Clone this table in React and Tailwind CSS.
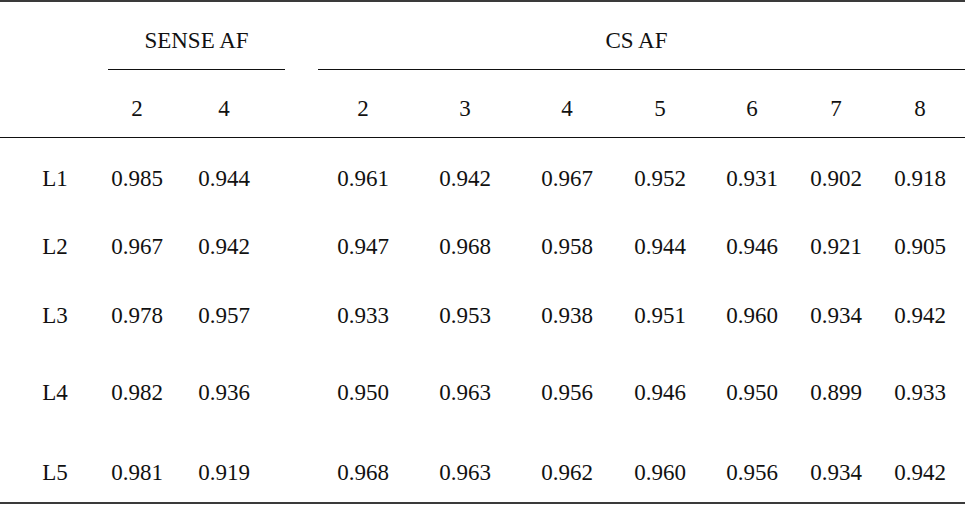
import React from "react";

const margins = [
  "ml-[20px]",
  "ml-[12px]",
  "ml-[17px]",
  "ml-[69px]",
  "ml-[32px]",
  "ml-[32px]",
  "ml-[23px]",
  "ml-[22px]",
  "ml-[14px]",
  "ml-[14px]",
];

const rows = [
  { label: "L1", vals: ["0.985", "0.944", "0.961", "0.942", "0.967", "0.952", "0.931", "0.902", "0.918"], mt: "mt-[28px]" },
  { label: "L2", vals: ["0.967", "0.942", "0.947", "0.968", "0.958", "0.944", "0.946", "0.921", "0.905"], mt: "mt-[42px]" },
  { label: "L3", vals: ["0.978", "0.957", "0.933", "0.953", "0.938", "0.951", "0.960", "0.934", "0.942"], mt: "mt-[43px]" },
  { label: "L4", vals: ["0.982", "0.936", "0.950", "0.963", "0.956", "0.946", "0.950", "0.899", "0.933"], mt: "mt-[51px]" },
  { label: "L5", vals: ["0.981", "0.919", "0.968", "0.963", "0.962", "0.960", "0.956", "0.934", "0.942"], mt: "mt-[54px]" },
];

function Row({ cells, className }) {
  return (
    <div className={"flex h-[26px] items-center leading-[26px] " + (className || "")}>
      {cells.map((c, i) => (
        <div key={i} className={"w-[70px] shrink-0 text-center " + margins[i]}>
          {c}
        </div>
      ))}
    </div>
  );
}

export default function App() {
  return (
    <div
      className="w-[965px] h-[506px] bg-white text-[#111] text-[23px] overflow-hidden flex flex-col"
      style={{ fontFamily: '"Liberation Serif", "Times New Roman", serif' }}
    >
      <div className="h-[2px] bg-[#3a3a3a]" />
      <div className="mt-[26px] flex h-[26px] items-center leading-[26px]">
        <div className="ml-[108px] w-[177px] text-center">SENSE AF</div>
        <div className="ml-[33px] flex-1 text-center pr-[10px]">CS AF</div>
      </div>
      <div className="mt-[15px] flex">
        <div className="ml-[108px] w-[177px] h-px bg-[#111]" />
        <div className="ml-[33px] flex-1 h-px bg-[#111]" />
      </div>
      <Row className="mt-[26px]" cells={["", "2", "4", "2", "3", "4", "5", "6", "7", "8"]} />
      <div className="mt-[15px] h-px bg-[#111]" />
      {rows.map((r) => (
        <Row key={r.label} className={r.mt} cells={[r.label, ...r.vals]} />
      ))}
      <div className="mt-[16px] h-[2px] bg-[#3a3a3a]" />
    </div>
  );
}
